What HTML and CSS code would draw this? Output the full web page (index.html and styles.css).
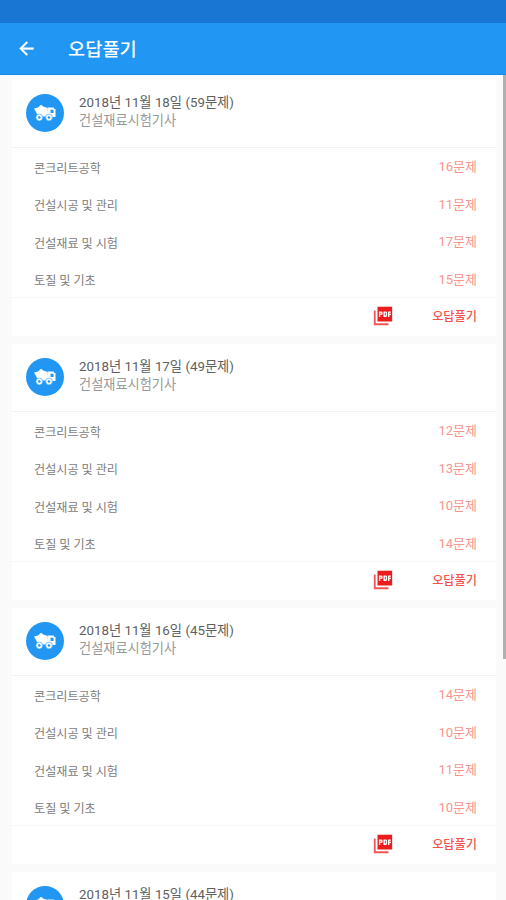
FILE: index.html
```html
<!DOCTYPE html>
<html lang="ko">
<head>
<meta charset="utf-8">
<title>오답풀기</title>
<link rel="stylesheet" href="styles.css">
</head>
<body>
<svg class="defs" aria-hidden="true">
  <symbol id="truck" viewBox="0 0 24 18">
    <path fill="#fff" d="M1 4.500 5 3.500 8 .8 11 3l2.500.5 1.500 2-1 1v6H5.500z"/>
    <path fill="#fff" fill-rule="evenodd" d="M14.500 3.500H21v1.500h1.500V13h-9V6.500h1zM17.500 5.800v3.200h3V5.800z"/>
    <circle cx="6.300" cy="13.500" r="3.400" fill="#fff" stroke="#2196f3" stroke-width=".6"/>
    <circle cx="16" cy="13.500" r="3.400" fill="#fff" stroke="#2196f3" stroke-width=".6"/>
    <circle cx="6.300" cy="13.500" r="1.300" fill="#2196f3"/>
    <circle cx="16" cy="13.500" r="1.300" fill="#2196f3"/>
  </symbol>
  <symbol id="pdf" viewBox="0 0 24 24">
    <path d="M22 2H6v16h16V2zm-10.500 7.500c0 .830-.670 1.500-1.500 1.500H9v2H7.500V7H10c.830 0 1.500.670 1.500 1.500v1zm5 2c0 .830-.670 1.500-1.500 1.500h-2.500V7H15c.830 0 1.500.670 1.500 1.500v3zm4-3H19v1h1.500V11H19v2h-1.500V7h3v1.500zM9 9.500h1v-1H9v1zm5 2h1v-3h-1v3z"/>
    <path opacity=".75" d="M4 6H2v16h16v-2H4V6z"/>
  </symbol>
</svg>
<div class="status"></div>
<header class="appbar">
  <svg class="back" viewBox="0 0 24 24"><path d="M20 11H7.830l5.590-5.590L12 4l-8 8 8 8 1.410-1.410L7.830 13H20v-2z"/></svg>
  <h1>오답풀기</h1>
</header>
<main class="list">
  <section class="card">
    <div class="head"><span class="avatar"><svg><use href="#truck"/></svg></span><div><p class="date">2018년 11월 18일 (59문제)</p><p class="exam">건설재료시험기사</p></div></div>
    <ul class="rows">
      <li><span>콘크리트공학</span><b>16문제</b></li>
      <li><span>건설시공 및 관리</span><b>11문제</b></li>
      <li><span>건설재료 및 시험</span><b>17문제</b></li>
      <li><span>토질 및 기초</span><b>15문제</b></li>
    </ul>
    <div class="foot"><svg class="pdf"><use href="#pdf"/></svg><span>오답풀기</span></div>
  </section>
  <section class="card">
    <div class="head"><span class="avatar"><svg><use href="#truck"/></svg></span><div><p class="date">2018년 11월 17일 (49문제)</p><p class="exam">건설재료시험기사</p></div></div>
    <ul class="rows">
      <li><span>콘크리트공학</span><b>12문제</b></li>
      <li><span>건설시공 및 관리</span><b>13문제</b></li>
      <li><span>건설재료 및 시험</span><b>10문제</b></li>
      <li><span>토질 및 기초</span><b>14문제</b></li>
    </ul>
    <div class="foot"><svg class="pdf"><use href="#pdf"/></svg><span>오답풀기</span></div>
  </section>
  <section class="card">
    <div class="head"><span class="avatar"><svg><use href="#truck"/></svg></span><div><p class="date">2018년 11월 16일 (45문제)</p><p class="exam">건설재료시험기사</p></div></div>
    <ul class="rows">
      <li><span>콘크리트공학</span><b>14문제</b></li>
      <li><span>건설시공 및 관리</span><b>10문제</b></li>
      <li><span>건설재료 및 시험</span><b>11문제</b></li>
      <li><span>토질 및 기초</span><b>10문제</b></li>
    </ul>
    <div class="foot"><svg class="pdf"><use href="#pdf"/></svg><span>오답풀기</span></div>
  </section>
  <section class="card">
    <div class="head"><span class="avatar"><svg><use href="#truck"/></svg></span><div><p class="date">2018년 11월 15일 (44문제)</p></div></div>
  </section>
  <div class="scrollbar"></div>
</main>
</body>
</html>
```
FILE: styles.css
```css
* { box-sizing: border-box; margin: 0; padding: 0; }
body {
  height: 900px;
  overflow: hidden;
  display: flex;
  flex-direction: column;
  background: #fafafa;
  font-family: Roboto, "Noto Sans CJK KR", sans-serif;
}
.defs { display: none; }
.status { flex: none; height: 23px; background: #1976d2; }
.appbar {
  flex: none;
  height: 52px;
  display: flex;
  align-items: center;
  padding-left: 16px;
  background: #2196f3;
  border-bottom: 1px solid #168be9;
  color: #fff;
}
.back { width: 21px; height: 21px; fill: #fff; stroke: #fff; stroke-width: .5; margin-right: 31px; }
h1 { font-size: 18.700px; font-weight: 500; line-height: 26px; padding-top: 3px; }
.list {
  position: relative;
  flex: 1;
  min-height: 0;
  overflow: hidden;
  padding: 5px 10px 0 12px;
}
.card { height: 256px; margin-bottom: 8px; background: #fff; }
.head {
  height: 68px;
  display: flex;
  align-items: flex-start;
  padding: 14px 0 0 14px;
  border-bottom: 1px solid #f2f2f2;
}
.avatar {
  width: 38px;
  height: 38px;
  margin-right: 15px;
  border-radius: 50%;
  background: #2196f3;
  display: flex;
  align-items: center;
  justify-content: center;
}
.avatar svg { width: 24px; height: 18px; }
.date, .exam { line-height: 18px; white-space: nowrap; }
.date { font-size: 13.300px; color: #606060; }
.exam { font-size: 13.200px; color: #999; }
.rows { list-style: none; height: 149px; }
.rows li {
  height: 37.500px;
  display: flex;
  align-items: center;
  justify-content: space-between;
  padding: 4px 19px 0 22px;
  font-size: 12.100px;
  line-height: 18px;
  color: #7d7d7d;
}
.rows b { font-weight: 400; font-size: 13px; color: #f9958f; margin-top: -3px; }
.foot {
  height: 39px;
  display: flex;
  align-items: center;
  justify-content: flex-end;
  padding: 0 19px 2px 0;
  border-top: 1px solid #f6f6f6;
  color: #f4544f;
  font-size: 12.200px;
  font-weight: 500;
}
.pdf { width: 22px; height: 22px; fill: #ed1c1c; margin-right: 38px; }
.scrollbar {
  position: absolute;
  top: 0;
  right: 0;
  width: 3px;
  height: 584px;
  background: #b0b0b0;
}
```
